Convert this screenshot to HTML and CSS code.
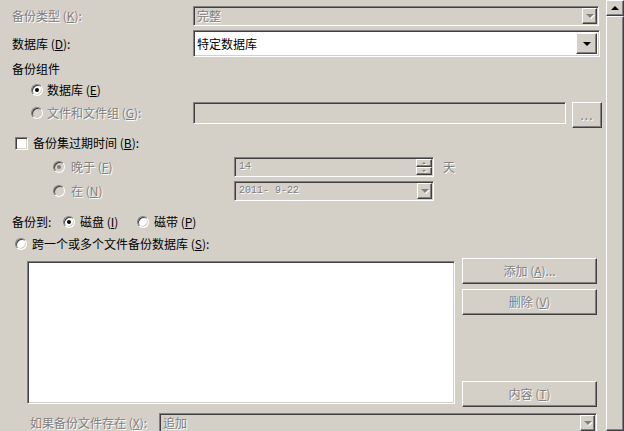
FILE: index.html
```html
<!DOCTYPE html>
<html lang="zh-CN">
<head>
    <meta charset="UTF-8">
    <title>备份数据库</title>
    <link rel="stylesheet" href="styles.css">
</head>
<body>
<div class="window">
    <div class="pane">
        <div class="row r-type">
            <span class="label off">备份类型 (<u>K</u>):</span>
            <div class="combo sunken dis w406">
                <span class="value off">完整</span>
                <span class="drop raised"><i class="tri dim"></i></span>
            </div>
        </div>

        <div class="row r-db">
            <span class="label">数据库 (<u>D</u>):</span>
            <div class="combo sunken big w407">
                <span class="value">特定数据库</span>
                <span class="drop raised"><i class="tri"></i></span>
            </div>
        </div>

        <div class="row r-group">
            <span>备份组件</span>
        </div>

        <div class="row r-opt indent">
            <span class="radio on"></span>
            <span>数据库 (<u>E</u>)</span>
        </div>

        <div class="row r-files">
            <span class="label indent opt">
                <span class="radio dis"></span>
                <span class="off">文件和文件组 (<u>G</u>):</span>
            </span>
            <div class="textbox sunken dis"></div>
            <button class="btn raised dots off">...</button>
        </div>

        <div class="row r-expire">
            <span class="check sunken"></span>
            <span>备份集过期时间 (<u>B</u>):</span>
        </div>

        <div class="row r-sub">
            <span class="sublabel">
                <span class="radio dis on"></span>
                <span class="off">晚于 (<u>F</u>)</span>
            </span>
            <div class="spin sunken dis">
                <span class="value off mono">14</span>
                <span class="spin-btns">
                    <span class="raised"><i class="tri small up dim"></i></span>
                    <span class="raised"><i class="tri small dim"></i></span>
                </span>
            </div>
            <span class="unit off">天</span>
        </div>

        <div class="row r-sub r-date">
            <span class="sublabel">
                <span class="radio dis"></span>
                <span class="off">在 (<u>N</u>)</span>
            </span>
            <div class="combo sunken dis w200">
                <span class="value off mono">2011- 9-22</span>
                <span class="drop raised"><i class="tri dim"></i></span>
            </div>
        </div>

        <div class="row r-dest">
            <span class="dest-label">备份到:</span>
            <span class="dest-opt">
                <span class="radio on"></span>
                <span>磁盘 (<u>I</u>)</span>
            </span>
            <span class="dest-opt">
                <span class="radio"></span>
                <span>磁带 (<u>P</u>)</span>
            </span>
        </div>

        <div class="row r-span">
            <span class="radio"></span>
            <span>跨一个或多个文件备份数据库 (<u>S</u>):</span>
        </div>

        <div class="files">
            <div class="listbox sunken"></div>
            <div class="file-btns">
                <button class="btn raised off">添加 (<u>A</u>)...</button>
                <button class="btn raised off">删除 (<u>V</u>)</button>
                <button class="btn raised off last">内容 (<u>T</u>)</button>
            </div>
        </div>

        <div class="row r-exists">
            <span class="exists-label off">如果备份文件存在 (<u>X</u>):</span>
            <div class="combo sunken dis w438">
                <span class="value off">追加</span>
                <span class="drop raised"><i class="tri dim"></i></span>
            </div>
        </div>
    </div>

    <div class="scrollbar">
        <div class="sb-up raised"><i class="tri up"></i></div>
        <div class="sb-thumb raised"></div>
    </div>
</div>
</body>
</html>
```

FILE: styles.css
```css
* {
    box-sizing: border-box;
}

body {
    margin: 0;
    background-color: #d4d0c8;
    color: #000;
    font-family: "Noto Sans CJK SC", "Noto Sans", sans-serif;
    font-size: 12px;
    line-height: 16px;
    overflow: hidden;
}

u {
    text-underline-offset: 1px;
}

.window {
    display: flex;
    width: 624px;
    height: 431px;
    overflow: hidden;
}

.pane {
    width: 606px;
    flex: none;
    padding-left: 12px;
}

/* classic 3d borders */
.sunken {
    border: 1px solid;
    border-color: #808080 #fff #fff #808080;
    box-shadow: inset 1px 1px 0 #404040, inset -1px -1px 0 #d4d0c8;
    background-color: #fff;
}

.sunken.dis {
    background-color: #d4d0c8;
}

.raised {
    border: 1px solid;
    border-color: #fff #404040 #404040 #fff;
    box-shadow: inset -1px -1px 0 #808080, inset 1px 1px 0 #d4d0c8;
    background-color: #d4d0c8;
}

.off {
    color: #808080;
    text-shadow: 1px 1px 0 #fff;
}

.mono {
    font-family: "Liberation Mono", monospace;
    font-size: 10px;
}

.row {
    display: flex;
    align-items: center;
    white-space: nowrap;
}

.label {
    width: 181px;
    flex: none;
}

.indent {
    padding-left: 19px;
}

.opt {
    display: flex;
    align-items: center;
    gap: 4px;
}

/* rows */
.r-type { margin-top: 6px; height: 20px; }
.r-db { margin-top: 4px; height: 27px; }
.r-group { margin-top: 4px; height: 16px; }
.r-opt { margin-top: 5px; height: 16px; gap: 4px; }
.r-files { margin-top: 4px; height: 26px; align-items: flex-start; }
.r-files .label { height: 21px; }
.r-expire { margin-top: 7px; height: 16px; padding-left: 3px; gap: 5px; }
.r-sub { margin-top: 6px; height: 20px; padding-left: 41px; }
.r-date { margin-top: 4px; }
.r-dest { margin-top: 13px; height: 16px; }
.r-span { margin-top: 6px; height: 16px; padding-left: 3px; gap: 5px; }
.r-exists { margin-top: 6px; height: 20px; padding-left: 18px; }

/* combos */
.combo {
    display: flex;
    align-items: center;
    height: 20px;
    padding: 1px;
    flex: none;
}

.combo.big {
    height: 27px;
}

.w406 { width: 406px; }
.w407 { width: 407px; }
.w200 { width: 200px; }
.w438 { width: 438px; }

.value {
    flex: 1;
    padding-left: 2px;
    overflow: hidden;
}

.drop {
    width: 15px;
    height: 16px;
    display: flex;
    align-items: center;
    justify-content: center;
    flex: none;
}

.big .drop {
    width: 21px;
    height: 21px;
    margin-right: 1px;
}

.tri {
    width: 0;
    height: 0;
    border-left: 4px solid transparent;
    border-right: 4px solid transparent;
    border-top: 4px solid #000;
}

.tri.up {
    border-top: none;
    border-bottom: 4px solid #000;
}

.tri.dim {
    border-top-color: #808080;
    filter: drop-shadow(1px 1px 0 #fff);
}

.tri.up.dim {
    border-bottom-color: #808080;
}

.tri.small {
    border-left-width: 2px;
    border-right-width: 2px;
    border-top-width: 2px;
}

.tri.small.up {
    border-bottom-width: 2px;
}

/* radio and check */
.radio {
    width: 12px;
    height: 12px;
    flex: none;
    border-radius: 50%;
    border: 1px solid;
    border-color: #808080 #fff #fff #808080;
    box-shadow: inset 1px 1px 0 #404040, inset -1px -1px 0 #d4d0c8;
    background-color: #fff;
    display: flex;
    align-items: center;
    justify-content: center;
}

.radio.on::after {
    content: "";
    width: 4px;
    height: 4px;
    border-radius: 50%;
    background-color: #000;
}

.radio.dis {
    background-color: #d4d0c8;
}

.radio.dis.on::after {
    background-color: #808080;
}

.check {
    width: 13px;
    height: 13px;
    flex: none;
}

/* file group */
.textbox {
    width: 373px;
    height: 22px;
    flex: none;
}

.btn {
    font-family: inherit;
    font-size: 12px;
    line-height: 16px;
    padding: 0;
    display: flex;
    align-items: center;
    justify-content: center;
    height: 26px;
}

.dots {
    width: 30px;
    margin-left: 6px;
    letter-spacing: 1px;
}

/* expiry */
.sublabel {
    width: 181px;
    flex: none;
    display: flex;
    align-items: center;
    gap: 6px;
}

.spin {
    width: 200px;
    height: 20px;
    padding: 1px;
    display: flex;
    align-items: center;
    flex: none;
}

.value.mono {
    padding-left: 3px;
}

.spin-btns {
    width: 16px;
    height: 16px;
    display: flex;
    flex-direction: column;
}

.spin-btns span {
    flex: 1;
    display: flex;
    align-items: center;
    justify-content: center;
}

.unit {
    margin-left: 9px;
}

/* destination */
.dest-label {
    width: 51px;
    flex: none;
}

.dest-opt {
    width: 74px;
    display: flex;
    align-items: center;
    gap: 5px;
}

/* file list */
.files {
    margin-top: 6px;
    height: 149px;
    padding-left: 15px;
    display: flex;
    gap: 7px;
}

.listbox {
    width: 428px;
    height: 143px;
    margin-top: 3px;
}

.file-btns {
    width: 135px;
    display: flex;
    flex-direction: column;
    gap: 5px;
}

.file-btns .last {
    margin-top: auto;
}

.exists-label {
    width: 129px;
    flex: none;
}

/* scrollbar */
.scrollbar {
    width: 18px;
    flex: none;
    display: flex;
    flex-direction: column;
}

.sb-up {
    height: 16px;
    display: flex;
    align-items: center;
    justify-content: center;
}

.sb-thumb {
    flex: 1;
}
```
